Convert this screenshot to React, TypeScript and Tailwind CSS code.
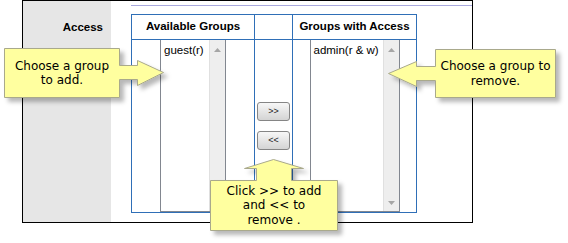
import React from "react";

function Scrollbar() {
  return (
    <div className="w-[16px] h-full bg-[#eeeeee] border-l border-[#e0e0e0] flex flex-col items-center justify-between pt-[8px] pb-[6px]">
      <svg width="7" height="4" viewBox="0 0 7 4">
        <path d="M0 4 L3.5 0 L7 4 Z" fill="#a6a6a6" />
      </svg>
      <svg width="7" height="4" viewBox="0 0 7 4">
        <path d="M0 0 L7 0 L3.5 4 Z" fill="#a6a6a6" />
      </svg>
    </div>
  );
}

function ListBox({ width, item }: { width: string; item: string }) {
  return (
    <div className={`${width} h-full border-x border-b border-[#828790] flex bg-white`}>
      <div className="flex-1 pl-[3px] pt-[3px] text-[11.5px] leading-[14px] text-black whitespace-nowrap overflow-hidden">
        {item}
      </div>
      <Scrollbar />
    </div>
  );
}

function Btn({ label }: { label: string }) {
  return (
    <button className="w-[33px] h-[19px] rounded-[3px] border border-[#858585] bg-linear-to-b from-[#f7f7f7] to-[#d4d4d4] text-[9px] leading-none text-[#222] flex items-center justify-center font-['Liberation_Sans',sans-serif]">
      {label}
    </button>
  );
}

export default function App() {
  return (
    <div className="relative w-[568px] h-[243px] bg-white overflow-hidden font-['Liberation_Sans',Arial,sans-serif]">
      <div className="ml-[22px] w-[451px] h-[223px] border border-black flex">
        <div className="w-[88px] h-full bg-[#e6e6e6] pt-[19px] pr-[8px] text-right text-[11.5px] leading-[14px] font-bold text-black">
          Access
        </div>
        <div className="flex-1 pl-[20px] pt-[4px]">
          <div className="h-px bg-[#a9a9de]" />
          <div className="mt-[8px] w-[286px] border border-[#2f6fb7]">
            <div className="flex h-[25px] border-b border-[#2f6fb7] text-[11.5px] font-bold text-black">
              <div className="w-[122px] flex items-center justify-center">Available Groups</div>
              <div className="w-[38px] border-l border-[#2f6fb7]" />
              <div className="w-[124px] border-l border-[#2f6fb7] flex items-center justify-center">
                Groups with Access
              </div>
            </div>
            <div className="flex h-[172px]">
              <div className="w-[122px] flex justify-center">
                <ListBox width="w-[66px]" item="guest(r)" />
              </div>
              <div className="w-[38px] border-l border-[#2f6fb7] flex flex-col items-center pt-[62px] gap-[10px]">
                <Btn label=">>" />
                <Btn label="<<" />
              </div>
              <div className="w-[124px] border-l border-[#2f6fb7] flex justify-center">
                <ListBox width="w-[90px]" item="admin(r & w)" />
              </div>
            </div>
          </div>
        </div>
      </div>

      <svg className="absolute left-0 top-0 pointer-events-none" width="568" height="243" viewBox="0 0 568 243">
        <defs>
          <filter id="sh" x="-20%" y="-20%" width="140%" height="150%">
            <feDropShadow dx="4" dy="4" stdDeviation="2" floodColor="#000" floodOpacity="0.28" />
          </filter>
        </defs>
        <g filter="url(#sh)" fill="#ffff9f" stroke="#a9a98c" strokeWidth="1">
          <path d="M4.5 48.5 H119.5 V65.5 H137.5 V60.5 L163.5 72.5 L137.5 85.5 V79.5 H119.5 V97.5 H4.5 Z" />
          <path d="M435.5 49.5 H555.5 V97.5 H435.5 V80.5 H416.5 V86.5 L388.5 73.5 L416.5 61.5 V66.5 H435.5 Z" />
          <path d="M210.5 180.5 H256.5 V168.5 H244.5 L273.5 159.5 L303.5 168.5 H291.5 V180.5 H337.5 V230.5 H210.5 Z" />
        </g>
      </svg>

      <div className="absolute left-[4px] top-[48px] w-[116px] h-[50px] flex items-center justify-center text-center text-[12px] leading-[14.5px] text-black font-['DejaVu_Sans',sans-serif]">
        Choose a group
        <br />
        to add.
      </div>
      <div className="absolute left-[435px] top-[49px] w-[121px] h-[49px] flex items-center justify-center text-center text-[12px] leading-[14.5px] text-black font-['DejaVu_Sans',sans-serif]">
        Choose a group to
        <br />
        remove.
      </div>
      <div className="absolute left-[210px] top-[180px] w-[128px] h-[51px] flex items-center justify-center text-center text-[12px] leading-[14.5px] text-black font-['DejaVu_Sans',sans-serif]">
        Click &gt;&gt; to add
        <br />
        and &lt;&lt; to
        <br />
        remove .
      </div>
    </div>
  );
}
